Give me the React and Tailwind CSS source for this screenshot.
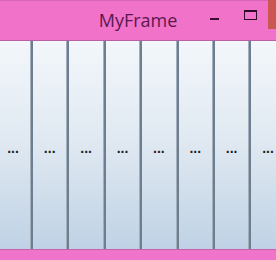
export default function App() {
  const cols = [0, 1, 2, 3, 4, 5, 6];

  return (
    <div className="flex h-[260px] w-[276px] flex-col overflow-hidden bg-[#f173c9] font-['Open_Sans',sans-serif]">
      {/* Title bar */}
      <div className="flex h-[41px] flex-none items-start border-t border-[#d865b5] border-b border-b-[#b95fa3]">
        <div className="flex-1" />
        <div className="pt-[6px] text-[18px] leading-[26px] text-[#5b1850]">MyFrame</div>
        <div className="flex flex-1 items-start justify-end">
          <div className="mt-[17px] h-[2px] w-[9px] bg-[#3d0d34]" />
          <div className="ml-[25px] mt-[9px] h-[10px] w-[13px] border border-t-2 border-[#2f0a2a]" />
          <div className="ml-[11px] -mt-px h-[29px] w-[8px] bg-[#cb5752]" />
        </div>
      </div>

      {/* Columns */}
      <div className="flex min-h-0 flex-1 bg-[#dde7f1]">
        <Column className="w-[30px] pr-[4px]" />
        {cols.map((i) => (
          <div key={i} className="flex flex-none">
            <div className="w-[3px] border-l border-[#a3b0bc] bg-[#6c7e8f]" />
            <Column className="w-[33.4px]" />
          </div>
        ))}
      </div>

      {/* Bottom strip */}
      <div className="h-[11px] flex-none border-t border-[#c564ad] bg-[#f074c9]" />
    </div>
  );
}

function Column({ className = "" }) {
  return (
    <div
      className={`flex flex-none items-center justify-center bg-gradient-to-b from-[#f3f7fb] via-[#dfe8f1] to-[#bfd2e5] ${className}`}
    >
      <span className="pt-[6px] font-['Liberation_Sans',sans-serif] text-[14px] font-bold leading-none text-[#1e1e1e]">
        ...
      </span>
    </div>
  );
}
